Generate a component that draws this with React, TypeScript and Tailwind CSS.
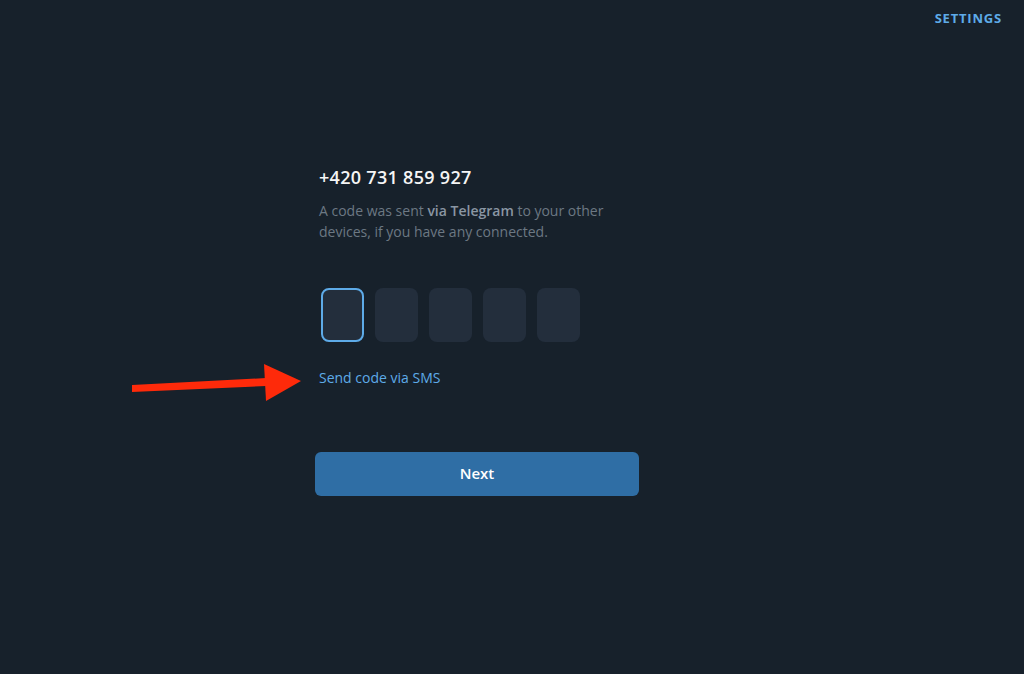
const font = { fontFamily: '"Open Sans", "Noto Sans", sans-serif' };

function CodeBox({ active }: { active?: boolean }) {
  return (
    <div
      className={
        'w-[43px] h-[54px] rounded-[8px] bg-[#232e3c] ' +
        (active ? 'border-2 border-[#5eabe8]' : 'border-2 border-transparent')
      }
    />
  );
}

export default function App() {
  return (
    <div className="relative w-[1024px] h-[674px] bg-[#17212b] overflow-hidden" style={font}>
      <div className="flex justify-end pr-[22px] pt-[9px]">
        <span className="text-[13px] font-bold text-[#5eabe8] tracking-[0.8px]">SETTINGS</span>
      </div>

      <div className="pl-[315px] pt-[136px] w-[639px]">
        <div className="pl-[4px]">
          <h1 className="text-[18px] font-semibold text-[#f5f5f5] leading-[24px] tracking-[0.3px]">+420 731 859 927</h1>
          <p className="mt-[11px] text-[14px] leading-[21px] text-[#6c7883] w-[285px]">
            A code was sent <b className="font-semibold text-[#8a96a3]">via Telegram</b> to your other devices, if you have any connected.
          </p>
        </div>

        <div className="flex gap-[11px] pl-[6px] mt-[46px]">
          <CodeBox active />
          <CodeBox />
          <CodeBox />
          <CodeBox />
          <CodeBox />
        </div>

        <div className="pl-[4px] mt-[23px]">
          <span className="text-[14px] leading-[20px] text-[#5eabe8]">Send code via SMS</span>
        </div>

        <button className="mt-[63px] w-[324px] h-[44px] rounded-[6px] bg-[#2f6ea5] text-white text-[15px] font-semibold">
          Next
        </button>
      </div>

      <svg className="absolute left-0 top-0" width="1024" height="674" viewBox="0 0 1024 674">
        <polygon points="132,385 266,378 266,386 132,392" fill="#fe2a0a" />
        <polygon points="264,364 301,381 266,401" fill="#fe2a0a" />
      </svg>
    </div>
  );
}
